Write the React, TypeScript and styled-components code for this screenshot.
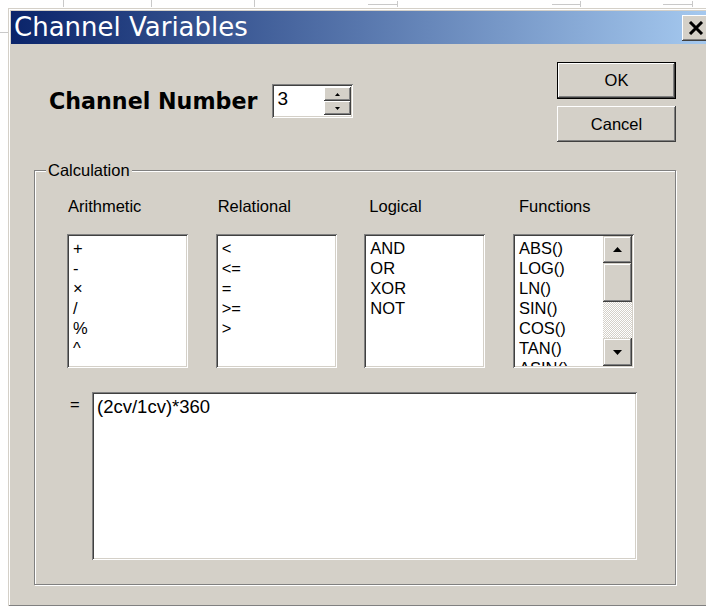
import React from "react";
import styled, { createGlobalStyle } from "styled-components";

const GlobalStyle = createGlobalStyle`
  html, body {
    margin: 0;
    padding: 0;
    background: #ffffff;
    overflow: hidden;
  }
  body {
    font-family: "Liberation Sans", Arial, sans-serif;
    color: #000;
  }
`;

/* Classic 3D edge recipes */
const raised = `
  box-shadow:
    inset -1px -1px #404040,
    inset 1px 1px #ffffff,
    inset -2px -2px #808080,
    inset 2px 2px #d4d0c8;
`;

const sunken = `
  box-shadow:
    inset 1px 1px #808080,
    inset -1px -1px #ffffff,
    inset 2px 2px #404040,
    inset -2px -2px #d4d0c8;
`;

const Desktop = styled.div`
  position: relative;
  width: 706px;
  height: 606px;
  overflow: hidden;
  box-sizing: border-box;
  padding: 8px 0 0 8px;
`;

/* faint chart axis sitting behind the dialog */
const Backdrop = styled.svg`
  position: absolute;
  left: 0;
  top: 0;
  z-index: 0;
`;

const Dialog = styled.div`
  position: relative;
  z-index: 1;
  width: 707px;
  height: 599px;
  box-sizing: border-box;
  padding: 3px;
  background: #d4d0c8;
  box-shadow:
    inset -1px -1px #404040,
    inset 1px 1px #d4d0c8,
    inset -2px -2px #808080,
    inset 2px 2px #ffffff;
  display: flex;
  flex-direction: column;
`;

const TitleBar = styled.div`
  height: 33px;
  flex: none;
  display: flex;
  align-items: center;
  justify-content: space-between;
  padding: 0 2px 0 3px;
  background: linear-gradient(to right, #0a246a, #a6caf0);
`;

const TitleText = styled.span`
  font-family: "DejaVu Sans", Verdana, sans-serif;
  font-size: 26px;
  line-height: 33px;
  color: #ffffff;
  white-space: nowrap;
`;

const CloseButton = styled.div`
  width: 28px;
  height: 26px;
  background: #d4d0c8;
  ${raised}
  display: flex;
  align-items: center;
  justify-content: center;
`;

const Body = styled.div`
  padding: 18px 0 0 23px;
`;

const TopSection = styled.div`
  width: 642px;
  display: flex;
  align-items: flex-start;
`;

const ChannelRow = styled.div`
  margin-top: 22px;
  padding-left: 15px;
  display: flex;
  align-items: center;
`;

const ChannelLabel = styled.span`
  font-family: "DejaVu Sans", Verdana, sans-serif;
  font-weight: bold;
  font-size: 22.2px;
  white-space: nowrap;
`;

const Spinner = styled.div`
  margin-left: 15px;
  width: 81px;
  height: 34px;
  box-sizing: border-box;
  padding: 2px;
  background: #ffffff;
  ${sunken}
  display: flex;
`;

const SpinValue = styled.div`
  flex: 1;
  font-size: 19px;
  line-height: 22px;
  padding: 2px 0 0 3px;
`;

const SpinButtons = styled.div`
  width: 27px;
  padding: 1px 0;
  display: flex;
  flex-direction: column;
`;

const SpinButton = styled.div`
  height: 14px;
  background: #d4d0c8;
  ${raised}
  display: flex;
  align-items: center;
  justify-content: center;
`;

const ButtonColumn = styled.div`
  margin-left: auto;
  display: flex;
  flex-direction: column;
  gap: 7px;
`;

const PushButton = styled.div<{ $default?: boolean }>`
  width: 119px;
  height: ${(p) => (p.$default ? 37 : 36)}px;
  box-sizing: border-box;
  background: #d4d0c8;
  border: ${(p) => (p.$default ? "1px solid #000000" : "none")};
  ${raised}
  display: flex;
  align-items: center;
  justify-content: center;
  font-size: 16.5px;
`;

const GroupBox = styled.div`
  position: relative;
  margin-top: 28px;
  width: 642px;
  height: 415px;
  box-sizing: border-box;
  border: 1px solid #808080;
  box-shadow: inset 1px 1px #ffffff, 1px 1px #ffffff;
  padding: 25px 0 0 32px;
`;

const GroupCaption = styled.span`
  position: absolute;
  top: -11px;
  left: 11px;
  padding: 0 2px;
  background: #d4d0c8;
  font-size: 16.5px;
  line-height: 20px;
`;

const Columns = styled.div`
  display: grid;
  grid-template-columns: repeat(4, 121px);
  column-gap: 27.67px;
`;

const Column = styled.div`
  display: flex;
  flex-direction: column;
`;

const ColumnHeader = styled.div<{ $indent: number }>`
  font-size: 16.5px;
  line-height: 20px;
  padding-left: ${(p) => p.$indent}px;
  white-space: nowrap;
`;

const ListBox = styled.div`
  margin-top: 18px;
  height: 134px;
  box-sizing: border-box;
  padding: 2px;
  background: #ffffff;
  ${sunken}
  display: flex;
  overflow: hidden;
`;

const ListItems = styled.div`
  flex: 1;
  padding: 2px 0 0 4px;
  overflow: hidden;
`;

const ListItem = styled.div`
  font-size: 16.5px;
  line-height: 20px;
  white-space: nowrap;
`;

const ScrollBar = styled.div`
  width: 29px;
  display: flex;
  flex-direction: column;
`;

const ScrollButton = styled.div<{ $h: number }>`
  height: ${(p) => p.$h}px;
  flex: none;
  background: #d4d0c8;
  box-shadow:
    inset -1px -1px #404040,
    inset 1px 1px #d4d0c8,
    inset -2px -2px #808080,
    inset 2px 2px #ffffff;
  display: flex;
  align-items: center;
  justify-content: center;
`;

const ScrollTrack = styled.div`
  flex: 1;
  background: repeating-conic-gradient(#ffffff 0 25%, #d4d0c8 0 50%) 0 0 / 2px 2px;
`;

const EqualsRow = styled.div`
  margin-top: 24px;
  display: flex;
  align-items: flex-start;
`;

const EqualsSign = styled.span`
  width: 22px;
  padding-left: 3px;
  margin-top: 2px;
  font-size: 16.5px;
  line-height: 20px;
`;

const ExpressionBox = styled.div`
  width: 545px;
  height: 168px;
  box-sizing: border-box;
  padding: 4px 5px;
  background: #ffffff;
  ${sunken}
  font-size: 18.5px;
  line-height: 22px;
`;

const Arrow = ({ up, w, h }: { up: boolean; w: number; h: number }) => (
  <svg width={w} height={h} viewBox={`0 0 ${w} ${h}`}>
    <polygon
      points={up ? `0,${h} ${w},${h} ${w / 2},0` : `0,0 ${w},0 ${w / 2},${h}`}
      fill="#000"
    />
  </svg>
);

const columns = [
  { title: "Arithmetic", indent: 1, items: ["+", "-", "×", "/", "%", "^"] },
  { title: "Relational", indent: 2, items: ["<", "<=", "=", ">=", ">"] },
  { title: "Logical", indent: 5, items: ["AND", "OR", "XOR", "NOT"] },
  {
    title: "Functions",
    indent: 6,
    items: ["ABS()", "LOG()", "LN()", "SIN()", "COS()", "TAN()", "ASIN()"],
    scroll: true,
  },
];

export default function App() {
  return (
    <>
      <GlobalStyle />
      <Desktop>
        <Backdrop width="706" height="40" viewBox="0 0 706 40">
          <g stroke="#c9c9c9" strokeWidth="1" fill="none">
            <line x1="63.5" y1="0" x2="63.5" y2="7" />
            <line x1="151.5" y1="0" x2="151.5" y2="7" />
            <line x1="254.5" y1="0" x2="254.5" y2="7" />
            <line x1="368" y1="4.5" x2="397" y2="4.5" />
            <line x1="397.5" y1="1" x2="397.5" y2="7" />
            <line x1="552" y1="4.5" x2="580" y2="4.5" />
            <line x1="580.5" y1="1" x2="580.5" y2="7" />
            <line x1="663" y1="4.5" x2="692" y2="4.5" />
            <line x1="692.5" y1="1" x2="692.5" y2="7" />
            <line x1="0" y1="32.5" x2="8" y2="32.5" />
          </g>
        </Backdrop>
        <Dialog>
          <TitleBar>
            <TitleText>Channel Variables</TitleText>
            <CloseButton>
              <svg width="16" height="14" viewBox="0 0 16 14">
                <path d="M2 1 L14 13 M14 1 L2 13" stroke="#000" strokeWidth="3" />
              </svg>
            </CloseButton>
          </TitleBar>
          <Body>
            <TopSection>
              <ChannelRow>
                <ChannelLabel>Channel Number</ChannelLabel>
                <Spinner>
                  <SpinValue>3</SpinValue>
                  <SpinButtons>
                    <SpinButton>
                      <Arrow up w={5} h={3} />
                    </SpinButton>
                    <SpinButton>
                      <Arrow up={false} w={5} h={3} />
                    </SpinButton>
                  </SpinButtons>
                </Spinner>
              </ChannelRow>
              <ButtonColumn>
                <PushButton $default>OK</PushButton>
                <PushButton>Cancel</PushButton>
              </ButtonColumn>
            </TopSection>
            <GroupBox>
              <GroupCaption>Calculation</GroupCaption>
              <Columns>
                {columns.map((col) => (
                  <Column key={col.title}>
                    <ColumnHeader $indent={col.indent}>{col.title}</ColumnHeader>
                    <ListBox>
                      <ListItems>
                        {col.items.map((it) => (
                          <ListItem key={it}>{it}</ListItem>
                        ))}
                      </ListItems>
                      {col.scroll && (
                        <ScrollBar>
                          <ScrollButton $h={27}>
                            <Arrow up w={9} h={5} />
                          </ScrollButton>
                          <ScrollButton $h={39} />
                          <ScrollTrack />
                          <ScrollButton $h={28}>
                            <Arrow up={false} w={9} h={5} />
                          </ScrollButton>
                        </ScrollBar>
                      )}
                    </ListBox>
                  </Column>
                ))}
              </Columns>
              <EqualsRow>
                <EqualsSign>=</EqualsSign>
                <ExpressionBox>(2cv/1cv)*360</ExpressionBox>
              </EqualsRow>
            </GroupBox>
          </Body>
        </Dialog>
      </Desktop>
    </>
  );
}
